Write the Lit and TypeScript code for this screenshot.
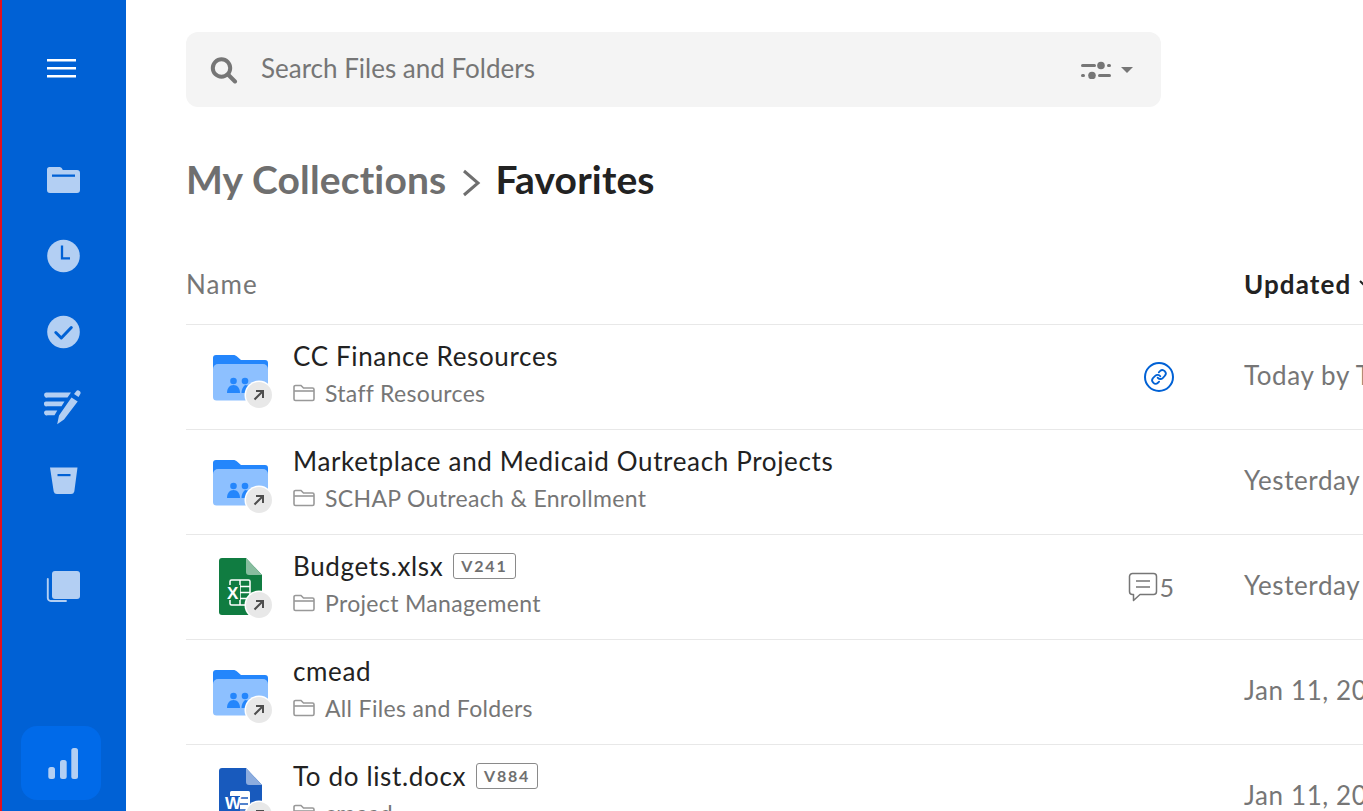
import { LitElement, html, css, svg } from 'lit'
import { customElement } from 'lit/decorators.js'

const folderIcon = svg`<svg class="ficon" width="80" height="80" viewBox="0 0 80 80">
  <path d="M27 20a3 3 0 0 1 3-3h17c2 0 3 .6 4.300 1.800L55 22h24a3 3 0 0 1 3 3v10H27z" fill="#2486fc"/>
  <path d="M27 31a5 5 0 0 1 5-5h45a5 5 0 0 1 5 5v28a3.500 3.500 0 0 1-3.500 3.500H30.500A3.500 3.500 0 0 1 27 59z" fill="#8dc0ff"/>
  <g fill="#2486fc">
    <circle cx="47.500" cy="43" r="3.300"/><circle cx="59" cy="43" r="3.300"/>
    <path d="M41 55c0-4.500 2.500-8 6.500-8s6.500 3.500 6.500 8z"/>
    <path d="M55.500 55c0-3 1-6 3.500-8 4 0 6.500 3.500 6.500 8z"/>
  </g>
</svg>`

const excelIcon = svg`<svg class="ficon" width="80" height="80" viewBox="0 0 80 80">
  <path d="M33 13a3 3 0 0 1 3-3h24l16 17v37a3 3 0 0 1-3 3H36a3 3 0 0 1-3-3z" fill="#107c41"/>
  <path d="M60 10l16 17H63a3 3 0 0 1-3-3z" fill="#88bd9f"/>
  <rect x="44" y="32" width="20" height="25" rx="1.500" fill="none" stroke="#fff" stroke-width="1.500"/>
  <path d="M54 32v25M44 38.500h20M44 44.500h20M44 50.500h20" stroke="#fff" stroke-width="1.500"/>
  <path d="M41 37h13v15H41z" fill="#107c41"/>
  <text x="41" y="50.500" class="ftxt">X</text>
</svg>`

const wordIcon = svg`<svg class="ficon" width="80" height="80" viewBox="0 0 80 80">
  <path d="M33 13a3 3 0 0 1 3-3h24l16 17v37a3 3 0 0 1-3 3H36a3 3 0 0 1-3-3z" fill="#185abd"/>
  <path d="M60 10l16 17H63a3 3 0 0 1-3-3z" fill="#8cacde"/>
  <rect x="44" y="33" width="20" height="25" rx="1.500" fill="#fff"/>
  <path d="M54 40h8M54 46h8M54 52h8" stroke="#185abd" stroke-width="1.500"/>
  <path d="M39 38h15v15H39z" fill="#185abd"/>
  <text x="39" y="51" class="ftxt">W</text>
</svg>`

const subFolder = svg`<svg class="sub-folder" width="22" height="18" viewBox="0 0 22 18" fill="none" stroke="#999" stroke-width="1.600">
  <path d="M1 3a1.500 1.500 0 0 1 1.500-1.500h5.500l2.500 2.500h9a1.500 1.500 0 0 1 1.500 1.500V15a1.500 1.500 0 0 1-1.500 1.500h-17A1.500 1.500 0 0 1 1 15z"/>
  <path d="M1 7h20"/>
</svg>`

const navIcons = [
  svg`<path d="M3 9.500A2.500 2.500 0 0 1 5.500 7H15c1.500 0 2.300.5 3 1.500L18.800 10H33a3 3 0 0 1 3 3v17a3 3 0 0 1-3 3H6a3 3 0 0 1-3-3z"/><path d="M8 14.500h23v2.300H8z" fill="#0061d5"/>`,
  svg`<circle cx="19.500" cy="20" r="16.300"/><path d="M18 9.500v12.800h8" fill="none" stroke="#0061d5" stroke-width="2.300"/>`,
  svg`<circle cx="19.500" cy="20" r="16.300"/><path d="M11.800 20.500l5.500 5.500 10-10.500" fill="none" stroke="#0061d5" stroke-width="3" stroke-linecap="round" stroke-linejoin="round"/>`,
  svg`<path d="M2 4.500h25l-3.500 5H3.500a2.500 2.500 0 0 1-1.500-5zM1.800 13.500h18.700l-3 4.800H3a2.400 2.400 0 0 1-1.200-4.800zM1.800 22.500h11.500l-2.800 4.800H3.500a2.400 2.400 0 0 1-1.700-4.800z"/><path d="M27.500 9.500l6.200 4L20 31.500l-6.800 4.700 1.800-8.700zM30 6l2-2.500a2.500 2.500 0 0 1 4 3L34.500 9z"/>`,
  svg`<path d="M6 3.500h27.500l-3.200 24a3.300 3.300 0 0 1-3.300 2.500H13a3.300 3.300 0 0 1-3.300-2.500z"/><path d="M13.500 10h13v2.200h-13z" fill="#0061d5"/>`,
  svg`<rect x="8" y="3" width="28" height="28" rx="3"/><path d="M3.800 11v19a3 3 0 0 0 3 3H22" fill="none" stroke="#b3cff3" stroke-width="1.900" stroke-linecap="round"/>`,
]

const rows = [
  { kind: 'folder', name: 'CC Finance Resources', path: 'Staff Resources', date: 'Today by Tanya Reed', extra: 'link' },
  { kind: 'folder', name: 'Marketplace and Medicaid Outreach Projects', path: 'SCHAP Outreach & Enrollment', date: 'Yesterday by Carol Mead' },
  { kind: 'excel', name: 'Budgets.xlsx', version: 'V241', path: 'Project Management', date: 'Yesterday by Carol Mead', extra: 'comment' },
  { kind: 'folder', name: 'cmead', path: 'All Files and Folders', date: 'Jan 11, 2023 by Carol Mead' },
  { kind: 'word', name: 'To do list.docx', version: 'V884', path: 'cmead', date: 'Jan 11, 2023 by Carol Mead' },
]

@customElement('app-root')
export class AppRoot extends LitElement {
  static styles = css`
    :host {
      display: flex;
      height: 811px;
      overflow: hidden;
      background: #fff;
      font-family: Lato, 'Open Sans', sans-serif;
      color: #222;
    }
    .nav {
      flex: none;
      width: 126px;
      border-left: 2px solid #e2101f;
      background: #0061d5;
      display: flex;
      flex-direction: column;
      align-items: center;
      padding-top: 59px;
      box-sizing: border-box;
    }
    .burger { margin-bottom: 63px; margin-left: -5px; flex: none; }
    .nav-item {
      height: 76px;
      display: flex;
      align-items: center;
      justify-content: center;
      flex: none;
    }
    .nav-item svg { display: block; fill: #b3cff3; }
    .nav-item.gap { margin-top: 28px; }
    .stats {
      margin-top: auto;
      margin-bottom: 11px;
      margin-left: -6px;
      width: 80px;
      height: 74px;
      border-radius: 16px;
      background: #006ae9;
      display: flex;
      align-items: center;
      justify-content: center;
    }
    .main {
      flex: 1;
      min-width: 0;
      padding: 32px 0 0 60px;
      overflow: hidden;
    }
    .search {
      width: 975px;
      height: 75px;
      box-sizing: border-box;
      background: #f4f4f4;
      border-radius: 12px;
      display: flex;
      align-items: center;
      padding: 0 28px 0 24px;
      font-size: 26px;
      color: #767676;
    }
    .search .ph { margin-left: 23px; margin-bottom: 4px; flex: 1; }
    .caret {
      width: 0;
      height: 0;
      margin-left: 10px;
      border: 6px solid transparent;
      border-top-color: #767676;
      border-bottom: 0;
    }
    .crumbs {
      display: flex;
      align-items: center;
      margin-top: 47px;
      height: 50px;
      font-size: 39px;
      letter-spacing: .15px;
      font-weight: 700;
      color: #6f6f6f;
      white-space: nowrap;
    }
    .crumbs svg { margin: 8px 14px 0 15px; }
    .crumbs .cur { color: #222; }
    .head, .row {
      display: grid;
      grid-template-columns: 107px 881px 1fr;
      width: 1500px;
      box-sizing: border-box;
      border-bottom: 1px solid #e8e8e8;
    }
    .head {
      height: 121px;
      align-items: center;
      font-size: 26px;
      letter-spacing: 1.100px;
      color: #767676;
      padding-top: 40px;
      grid-template-columns: 988px 1fr;
    }
    .updated {
      display: flex;
      align-items: center;
      gap: 8px;
      padding-left: 70px;
      font-weight: 700;
      color: #222;
    }
    .row { height: 105px; align-items: center; }
    .icon-cell {
      position: relative;
      height: 80px;
      margin-top: 2px;
    }
    .ficon { display: block; overflow: visible; }
    .ftxt {
      font: 700 17px 'Liberation Sans', Arial, sans-serif;
      fill: #fff;
    }
    .badge {
      position: absolute;
      left: 60px;
      top: 44px;
      width: 26px;
      height: 26px;
      border-radius: 50%;
      background: #e8e8e8;
      box-shadow: 0 0 0 1.500px #fff;
      display: flex;
      align-items: center;
      justify-content: center;
    }
    .info {
      display: flex;
      align-items: center;
      justify-content: space-between;
      min-width: 0;
    }
    .text { margin-bottom: 6px; }
    .title {
      display: flex;
      align-items: center;
      gap: 10px;
      font-size: 26px;
      letter-spacing: .65px;
      line-height: 32px;
      color: #222;
    }
    .version {
      border: 1px solid #8a8a8a;
      border-radius: 3px;
      height: 24px;
      line-height: 24px;
      padding: 0 7px;
      font-size: 16px;
      font-weight: 700;
      letter-spacing: 1.800px;
      color: #6f6f6f;
    }
    .path {
      display: flex;
      align-items: center;
      gap: 10px;
      margin-top: 5px;
      font-size: 23px;
      letter-spacing: .33px;
      line-height: 32px;
      color: #767676;
    }
    .extra {
      display: flex;
      align-items: center;
      gap: 1px;
      font-size: 25px;
      color: #767676;
    }
    .date {
      padding: 0 0 4px 70px;
      font-size: 26px;
      letter-spacing: .6px;
      color: #767676;
      white-space: nowrap;
    }
  `

  renderExtra(kind?: string) {
    if (kind === 'link') {
      return html`<svg width="30" height="30" viewBox="0 0 30 30" fill="none" stroke="#0061d5" stroke-width="2">
        <circle cx="15" cy="15" r="14"/>
        <g transform="translate(6.800 6.800) scale(.68)" stroke-width="2.600" stroke-linecap="round" stroke-linejoin="round">
          <path d="M10 13a5 5 0 0 0 7.540.54l3-3a5 5 0 0 0-7.070-7.070l-1.720 1.710"/>
          <path d="M14 11a5 5 0 0 0-7.540-.54l-3 3a5 5 0 0 0 7.070 7.070l1.710-1.710"/>
        </g>
      </svg>`
    }
    if (kind === 'comment') {
      return html`<svg width="30" height="30" viewBox="0 0 30 30" fill="none" stroke="#767676" stroke-width="1.500">
        <path d="M4.500 1.500h21a3 3 0 0 1 3 3v15a3 3 0 0 1-3 3H12L5.500 28.500V22.500h-1a3 3 0 0 1-3-3v-15a3 3 0 0 1 3-3z" stroke-linejoin="round"/>
        <path d="M8 9h14M8 15h14"/>
      </svg><span>5</span>`
    }
    return ''
  }

  renderRow(r: (typeof rows)[number]) {
    const icon = r.kind === 'excel' ? excelIcon : r.kind === 'word' ? wordIcon : folderIcon
    return html`<div class="row">
      <div class="icon-cell">
        ${icon}
        <div class="badge">
          <svg width="14" height="14" viewBox="0 0 14 14" fill="none" stroke="#4e4e4e" stroke-width="2">
            <path d="M2.500 11.500l8.500-8.500M4 3h7v7"/>
          </svg>
        </div>
      </div>
      <div class="info">
        <div class="text">
          <div class="title">
            <span>${r.name}</span>
            ${r.version ? html`<span class="version">${r.version}</span>` : ''}
          </div>
          <div class="path">${subFolder}<span>${r.path}</span></div>
        </div>
        <div class="extra">${this.renderExtra(r.extra)}</div>
      </div>
      <div class="date">${r.date}</div>
    </div>`
  }

  render() {
    return html`
      <nav class="nav">
        <svg class="burger" width="29" height="20" viewBox="0 0 29 20" fill="#fff">
          <rect y="0" width="29" height="2.500"/><rect y="8" width="29" height="2.500"/><rect y="16" width="29" height="2.500"/>
        </svg>
        ${navIcons.map((ic, i) => html`<div class="nav-item ${i === 5 ? 'gap' : ''}">
          <svg width="40" height="40" viewBox="0 0 40 40">${ic}</svg>
        </div>`)}
        <div class="stats">
          <svg width="34" height="34" viewBox="0 0 34 34" fill="#b3cff3">
            <rect x="4.300" y="21" width="6.700" height="12" rx="2.500"/>
            <rect x="16" y="14" width="6.700" height="19" rx="2.500"/>
            <rect x="27.300" y="2" width="6.700" height="31" rx="2.500"/>
          </svg>
        </div>
      </nav>
      <main class="main">
        <div class="search">
          <svg width="28" height="28" viewBox="0 0 28 28" fill="none" stroke="#767676" stroke-width="4">
            <circle cx="11.500" cy="12" r="8.700"/><path d="M18 18.500l7 7" stroke-linecap="round"/>
          </svg>
          <span class="ph">Search Files and Folders</span>
          <svg width="30" height="18" viewBox="0 0 30 18" fill="#767676">
            <rect x="0" y="3" width="15" height="3" rx="1.500"/><circle cx="20" cy="4.500" r="3.800"/><rect x="26" y="3" width="4" height="3" rx="1.500"/>
            <rect x="0" y="13" width="4" height="3" rx="1.500"/><circle cx="11" cy="14.500" r="3.800"/><rect x="17" y="13" width="13" height="3" rx="1.500"/>
          </svg>
          <span class="caret"></span>
        </div>
        <div class="crumbs">
          <span>My Collections</span>
          <svg width="20" height="28" viewBox="0 0 20 28" fill="none" stroke="#6f6f6f" stroke-width="3"><path d="M3 2l14 12L3 26"/></svg>
          <span class="cur">Favorites</span>
        </div>
        <div class="head">
          <span>Name</span>
          <span class="updated">Updated
            <svg width="12" height="8" viewBox="0 0 12 8" fill="none" stroke="#222" stroke-width="2"><path d="M1 1l5 5 5-5"/></svg>
          </span>
        </div>
        ${rows.map(r => this.renderRow(r))}
      </main>
    `
  }
}
